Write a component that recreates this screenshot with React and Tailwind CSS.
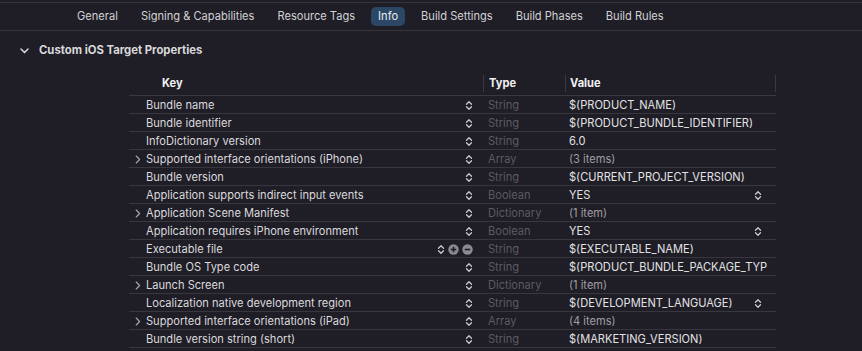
import React from 'react';

const tabs = ['General', 'Signing & Capabilities', 'Resource Tags', 'Info', 'Build Settings', 'Build Phases', 'Build Rules'];

const rows = [
  { key: 'Bundle name', type: 'String', value: '$(PRODUCT_NAME)' },
  { key: 'Bundle identifier', type: 'String', value: '$(PRODUCT_BUNDLE_IDENTIFIER)' },
  { key: 'InfoDictionary version', type: 'String', value: '6.0' },
  { key: 'Supported interface orientations (iPhone)', type: 'Array', value: '(3 items)', group: true },
  { key: 'Bundle version', type: 'String', value: '$(CURRENT_PROJECT_VERSION)' },
  { key: 'Application supports indirect input events', type: 'Boolean', value: 'YES', picker: true },
  { key: 'Application Scene Manifest', type: 'Dictionary', value: '(1 item)', group: true },
  { key: 'Application requires iPhone environment', type: 'Boolean', value: 'YES', picker: true },
  { key: 'Executable file', type: 'String', value: '$(EXECUTABLE_NAME)', edit: true },
  { key: 'Bundle OS Type code', type: 'String', value: '$(PRODUCT_BUNDLE_PACKAGE_TYP' },
  { key: 'Launch Screen', type: 'Dictionary', value: '(1 item)', group: true },
  { key: 'Localization native development region', type: 'String', value: '$(DEVELOPMENT_LANGUAGE)', picker: true },
  { key: 'Supported interface orientations (iPad)', type: 'Array', value: '(4 items)', group: true },
  { key: 'Bundle version string (short)', type: 'String', value: '$(MARKETING_VERSION)' },
];

const Stepper = ({ className = '' }) => (
  <svg width="8" height="11" viewBox="0 0 8 11" className={className}>
    <path d="M1.5 4.2 L4 1.7 L6.5 4.2" fill="none" stroke="#c9c9cc" strokeWidth="1.3" strokeLinecap="round" strokeLinejoin="round" />
    <path d="M1.5 6.8 L4 9.3 L6.5 6.8" fill="none" stroke="#c9c9cc" strokeWidth="1.3" strokeLinecap="round" strokeLinejoin="round" />
  </svg>
);

const RoundButton = ({ plus }) => (
  <svg width="11" height="11" viewBox="0 0 11 11">
    <circle cx="5.5" cy="5.5" r="5.2" fill="#8b8a90" />
    <path d="M2.8 5.5 H8.2" stroke="#1f1d25" strokeWidth="1.6" />
    {plus && <path d="M5.5 2.8 V8.2" stroke="#1f1d25" strokeWidth="1.6" />}
  </svg>
);

const Disclosure = () => (
  <svg width="6" height="9" viewBox="0 0 6 9">
    <path d="M1.2 1 L4.6 4.5 L1.2 8" fill="none" stroke="#a9a9ad" strokeWidth="1.1" strokeLinecap="round" strokeLinejoin="round" />
  </svg>
);

export default function App() {
  return (
    <div
      className="w-[862px] h-[351px] bg-[#1f1d25] text-[#dcdcde] overflow-hidden pt-[2px]"
      style={{ fontFamily: 'Inter, "Liberation Sans", sans-serif' }}
    >
      {/* Tab bar */}
      <div className="h-[29px] border-t border-b border-[#36353b] flex items-center pl-[70px] gap-[9px] text-[11.1px]">
        {tabs.map((t) => (
          <div
            key={t}
            className={
              t === 'Info'
                ? 'px-[7px] h-[19px] flex items-center rounded-[5px] bg-[#2c4766] text-[#e8edf3]'
                : 'px-[7px] h-[19px] flex items-center text-[#d2d2d5]'
            }
          >
            {t}
          </div>
        ))}
      </div>

      {/* Section header */}
      <div className="flex items-center h-[38px] pl-[20px] gap-[10px] pt-[1px]">
        <svg width="9" height="6" viewBox="0 0 9 6">
          <path d="M1 1 L4.5 4.6 L8 1" fill="none" stroke="#d4d4d7" strokeWidth="1.5" strokeLinecap="round" strokeLinejoin="round" />
        </svg>
        <span className="text-[11.3px] font-bold text-[#d9d9dc]">Custom iOS Target Properties</span>
      </div>

      {/* Table */}
      <div className="ml-[129px] w-[647px] text-[11.1px]">
        <div className="flex h-[27px] border-b border-[#3a393f] font-bold text-[#f0f0f2] pt-[6px]">
          <div className="w-[354px] pl-[33px] flex items-center h-[17px]">Key</div>
          <div className="w-[82px] pl-[5px] flex items-center border-l border-[#3a393f] h-[17px]">Type</div>
          <div className="flex-1 pl-[4px] flex items-center border-l border-r border-[#3a393f] h-[17px]">Value</div>
        </div>
        {rows.map((r) => (
          <div key={r.key} className="flex h-[18px] border-b border-[#38373d] items-center pt-[1px]">
            <div className="w-[354px] flex items-center h-full">
              <div className="w-[17px] flex justify-end pr-[5px]">{r.group && <Disclosure />}</div>
              <span className="flex-1 whitespace-nowrap text-[#dadadd]">{r.key}</span>
              <div className="flex items-center gap-[3px] pr-[10px]">
                <Stepper />
                {r.edit && (
                  <>
                    <RoundButton plus />
                    <RoundButton />
                  </>
                )}
              </div>
            </div>
            <div className="w-[82px] pl-[5px] text-[#5c5b61] whitespace-nowrap">{r.type}</div>
            <div className="flex-1 pl-[4px] flex items-center overflow-hidden">
              <span className={r.group ? 'whitespace-nowrap text-[#9f9ea4]' : 'whitespace-nowrap text-[#e2e2e4]'}>{r.value}</span>
              {r.picker && (
                <div className="ml-auto pr-[14px] flex">
                  <Stepper />
                </div>
              )}
            </div>
          </div>
        ))}
      </div>
    </div>
  );
}
